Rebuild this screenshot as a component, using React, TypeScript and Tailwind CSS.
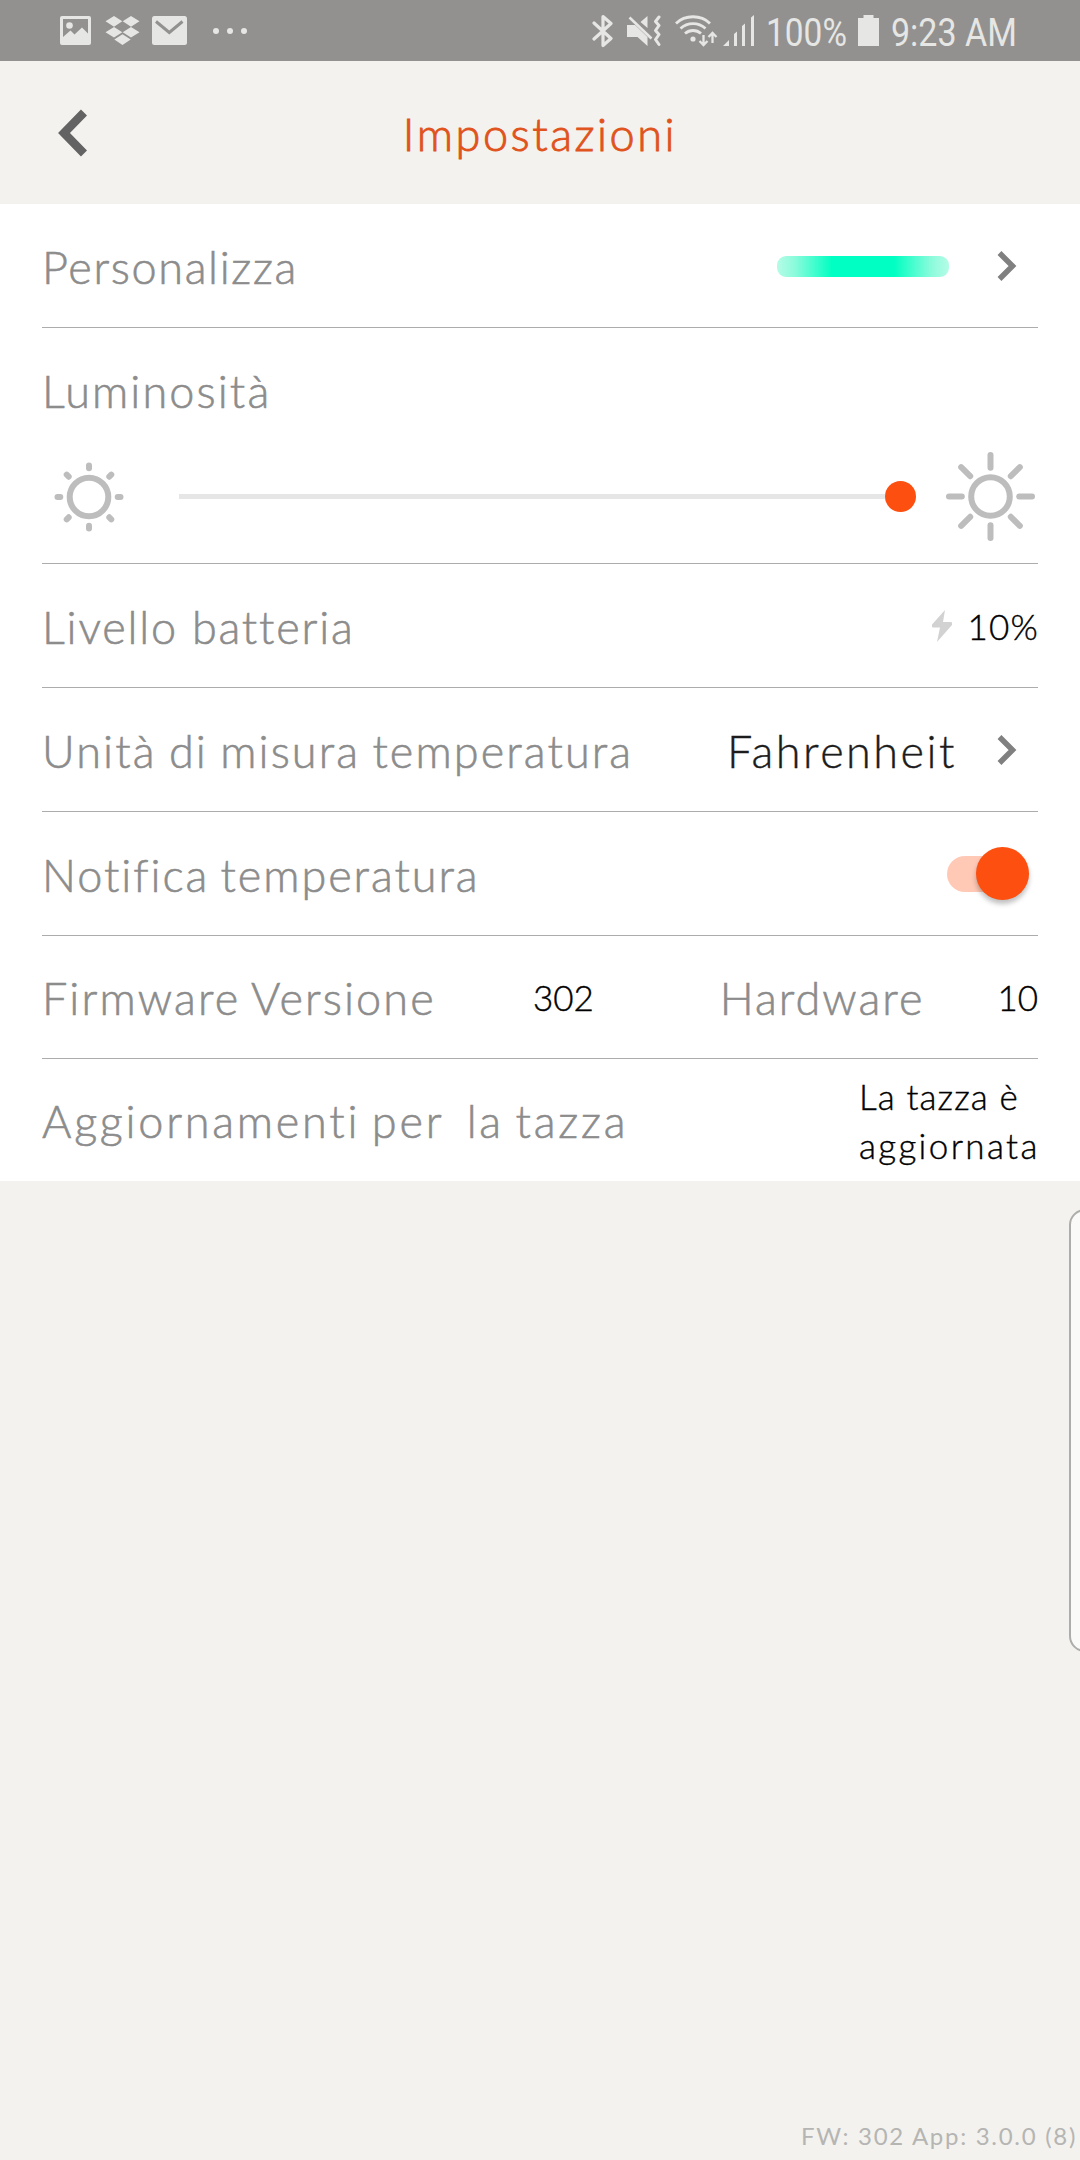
import type { ReactNode } from "react";
import clsx from "clsx";

const rays = [0, 45, 90, 135, 180, 225, 270, 315];

function StatusBar() {
  return (
    <div className="flex h-[61px] items-center bg-[#92918f] pl-[60px] text-[#e6e6e4]">
      <svg width="31" height="29" viewBox="0 0 31 29" className="mr-[14px]">
        <path
          fill="currentColor"
          fillRule="evenodd"
          d="M2 0h27a2 2 0 0 1 2 2v25a2 2 0 0 1-2 2H2a2 2 0 0 1-2-2V2a2 2 0 0 1 2-2zM3 3v18l7.500-6.500 4 4L22 11.500l6 6V3z"
        />
        <circle cx="9.500" cy="9.500" r="3.300" fill="currentColor" />
      </svg>
      <svg width="35" height="29" viewBox="0 0 35 29" fill="currentColor" className="mr-3">
        <path d="M9 0l8.300 5.300L9 10.700.500 5.300zM26 0l8.500 5.300-8.500 5.400-8.300-5.400zM9 11l8.300 5.200L9 21.500.500 16.200zM26 11l8.500 5.200-8.500 5.300-8.300-5.300zM17.500 18.200l8.200 5.200-8.200 5.600-8.200-5.600z" />
      </svg>
      <svg width="35" height="29" viewBox="0 0 35 29" className="mr-[26px]">
        <rect width="35" height="29" rx="2.500" fill="currentColor" />
        <path d="M4 5.500l13.300 11L30.500 5.500" fill="none" stroke="#92918f" strokeWidth="3" />
      </svg>
      <svg width="34" height="8" viewBox="0 0 34 8" fill="currentColor">
        <circle cx="3" cy="4" r="3" />
        <circle cx="17" cy="4" r="3" />
        <circle cx="31" cy="4" r="3" />
      </svg>

      <svg width="22" height="34" viewBox="0 0 22 34" className="ml-[345px] mr-[13px]">
        <path
          d="M2 9l17 15.500-8 7V2.500l8 7L2 25"
          fill="none"
          stroke="currentColor"
          strokeWidth="3.200"
          strokeLinejoin="round"
          strokeLinecap="round"
        />
      </svg>
      <svg width="34" height="32" viewBox="0 0 34 32" className="mr-[14px]">
        <path d="M0 10h8l12.500 12v9L10.500 22H0zM20.500 1v12L13.500 7z" fill="currentColor" />
        <path d="M2.500 2.500l22 21" stroke="currentColor" strokeWidth="2.600" />
        <path
          d="M32 2l-3.500 4.500 3.500 4-3.500 5 3.500 4-3.500 5 3.500 5"
          fill="none"
          stroke="currentColor"
          strokeWidth="3"
          strokeLinejoin="round"
          strokeLinecap="round"
        />
      </svg>
      <svg width="43" height="32" viewBox="0 0 43 32" className="mr-[5px]">
        <g fill="none" stroke="currentColor" strokeWidth="2.800">
          <path d="M1 8.500c9-9 25-9 34 0" />
          <path d="M5.500 13.500c7-6.500 18-6.500 25 0" />
          <path d="M10 18.500c4.500-4 11.500-4 16 0" />
        </g>
        <circle cx="18" cy="24" r="2.600" fill="currentColor" />
        <g fill="none" stroke="currentColor" strokeWidth="2.300">
          <path d="M28.500 20v10M24.500 26l4 4 4-4" />
          <path d="M37.500 28V18M33.500 22l4-4 4 4" />
        </g>
      </svg>
      <svg width="32" height="31" viewBox="0 0 32 31" fill="currentColor" className="mr-[11px]">
        <path d="M0 31l6-6v6zM11 31V19l3-2.500V31zM19 31V11l3-2.500V31zM28 31V2.500L31 0v31z" />
      </svg>
      <span className="w-[92px] origin-left scale-x-[0.88] whitespace-nowrap pt-[4px] font-['Roboto'] text-[38px] leading-none">
        100%
      </span>
      <svg width="21" height="31" viewBox="0 0 21 31" fill="currentColor" className="mr-3">
        <path d="M5.500 0h10v3H21v28H0V3h5.500z" />
      </svg>
      <span className="origin-left scale-x-[0.895] whitespace-nowrap pt-[4px] font-['Roboto'] text-[38px] leading-none">
        9:23 AM
      </span>
    </div>
  );
}

function Row({ className, children }: { className?: string; children: ReactNode }) {
  return (
    <div className={clsx("flex items-center border-[#acacac]", className)}>{children}</div>
  );
}

function Label({ className, children }: { className?: string; children: ReactNode }) {
  return (
    <span
      className={clsx(
        "whitespace-pre pt-[3px] text-[45px] font-light leading-none text-[#8c8c8c] [-webkit-text-stroke:0.6px_#8c8c8c]",
        className
      )}
    >
      {children}
    </span>
  );
}

function Chevron() {
  return (
    <svg width="20" height="32" viewBox="0 0 20 32" className="mr-[21px]">
      <path d="M2.500 3l13 13-13 13" fill="none" stroke="#808080" strokeWidth="5.500" />
    </svg>
  );
}

function Sun({ size, ray }: { size: number; ray: number }) {
  return (
    <svg width={size} height={size} viewBox={`${-size / 2} ${-size / 2} ${size} ${size}`}>
      <g fill="none" stroke="#bdbdbd" strokeWidth="6" strokeLinecap="round">
        <circle r="19.300" />
        {rays.map((angle) => (
          <path key={angle} d={`M0 -28.700V${-ray}`} transform={`rotate(${angle})`} />
        ))}
      </g>
    </svg>
  );
}

export default function App() {
  return (
    <div className="relative flex h-[2160px] w-[1080px] flex-col overflow-hidden bg-[#f3f2ee] font-['Lato',sans-serif]">
      <StatusBar />

      <header className="grid h-[143px] grid-cols-[1fr_auto_1fr] items-center">
        <svg width="30" height="48" viewBox="0 0 30 48" className="ml-[57px]">
          <path d="M27 3.500L7 24l20 20.500" fill="none" stroke="#636363" strokeWidth="8.500" />
        </svg>
        <h1 className="pt-1 text-[45px] font-light leading-none tracking-[2.550px] text-[#e0531c] [-webkit-text-stroke:0.9px_#e0531c]">
          Impostazioni
        </h1>
      </header>

      <main className="flex flex-col bg-white px-[42px]">
        <Row className="h-[124px] border-b">
          <Label className="tracking-[1.650px]">Personalizza</Label>
          <div className="ml-auto mr-[48px] mt-px h-[21px] w-[172px] rounded-[9px] bg-[linear-gradient(90deg,#b5fce6_0%,#8dfbdc_10%,#00ffc2_32%,#00ffc2_68%,#8dfbdc_90%,#b5fce6_100%)]" />
          <Chevron />
        </Row>

        <div className="flex h-[236px] flex-col border-b border-[#acacac] pt-[38px]">
          <Label className="tracking-[2.100px]">Luminosità</Label>
          <div className="mt-[36px] flex items-center pl-[11px] pr-px">
            <Sun size={72} ray={31.5} />
            <div className="ml-[54px] flex flex-1 items-center">
              <div className="h-[5px] flex-1 bg-[#e6e6e6]" />
              <div className="size-[31px] rounded-full bg-[#fd4f0f]" />
            </div>
            <div className="ml-[28px]">
              <Sun size={93} ray={41.5} />
            </div>
          </div>
        </div>

        <Row className="h-[124px] border-b">
          <Label className="tracking-[1.800px]">Livello batteria</Label>
          <svg width="20" height="32" viewBox="0 0 20 32" className="ml-auto mr-[16px]">
            <path d="M13 0L0 14.500q-.500 3 1 3h7L5 32 20 15q.500-3-1-3h-8z" fill="#d2d2d2" />
          </svg>
          <span className="-mr-px pt-0.5 text-[35px] font-light leading-none tracking-[1.200px] text-black [-webkit-text-stroke:0.4px_#000]">
            10%
          </span>
        </Row>

        <Row className="h-[124px] border-b">
          <Label className="tracking-[2.100px] [word-spacing:-2px]">
            Unità di misura temperatura
          </Label>
          <span className="ml-auto mr-[40px] pt-[3px] text-[45px] font-light leading-none tracking-[2.500px] text-[#1c1c1c] [-webkit-text-stroke:0.4px_#1c1c1c]">
            Fahrenheit
          </span>
          <Chevron />
        </Row>

        <Row className="h-[124px] border-b">
          <Label className="tracking-[1.950px] [word-spacing:-3px]">Notifica temperatura</Label>
          <div className="ml-auto mr-[9px] flex h-[36px] w-[82px] items-center justify-end rounded-full bg-[#ffc9b6]">
            <div className="size-[53px] shrink-0 rounded-full bg-[#fd4f0f] shadow-[0_4px_5px_rgba(0,0,0,0.25)]" />
          </div>
        </Row>

        <Row className="h-[123px] border-b">
          <Label className="w-[491px] tracking-[2.100px] [word-spacing:-2px]">
            Firmware Versione
          </Label>
          <span className="text-[35px] font-light leading-none text-black [-webkit-text-stroke:0.4px_#000]">
            302
          </span>
          <Label className="ml-auto mr-[73px] tracking-[2px]">Hardware</Label>
          <span className="text-[35px] font-light leading-none text-black [-webkit-text-stroke:0.4px_#000]">
            10
          </span>
        </Row>

        <Row className="h-[122px]">
          <Label className="tracking-[2.750px] [word-spacing:-3.300px]">
            {"Aggiornamenti per  la tazza"}
          </Label>
          <p className="ml-auto w-[179px] whitespace-nowrap pt-0.5 text-[35px] font-light leading-[49.500px] tracking-[1.100px] text-black [-webkit-text-stroke:0.4px_#000]">
            La tazza è
            <br />
            <span className="tracking-[2.350px]">aggiornata</span>
          </p>
        </Row>
      </main>

      <footer className="mt-auto self-end pb-[12px] pr-[3px] text-[24px] leading-none tracking-[1.700px] text-[#b5b5b3]">
        FW: 302 App: 3.0.0 (8)
      </footer>

      <div className="absolute left-[1069px] top-[1209px] h-[443px] w-[40px] rounded-[16px] border-2 border-[#adadab] bg-[#fafaf9]" />
    </div>
  );
}
